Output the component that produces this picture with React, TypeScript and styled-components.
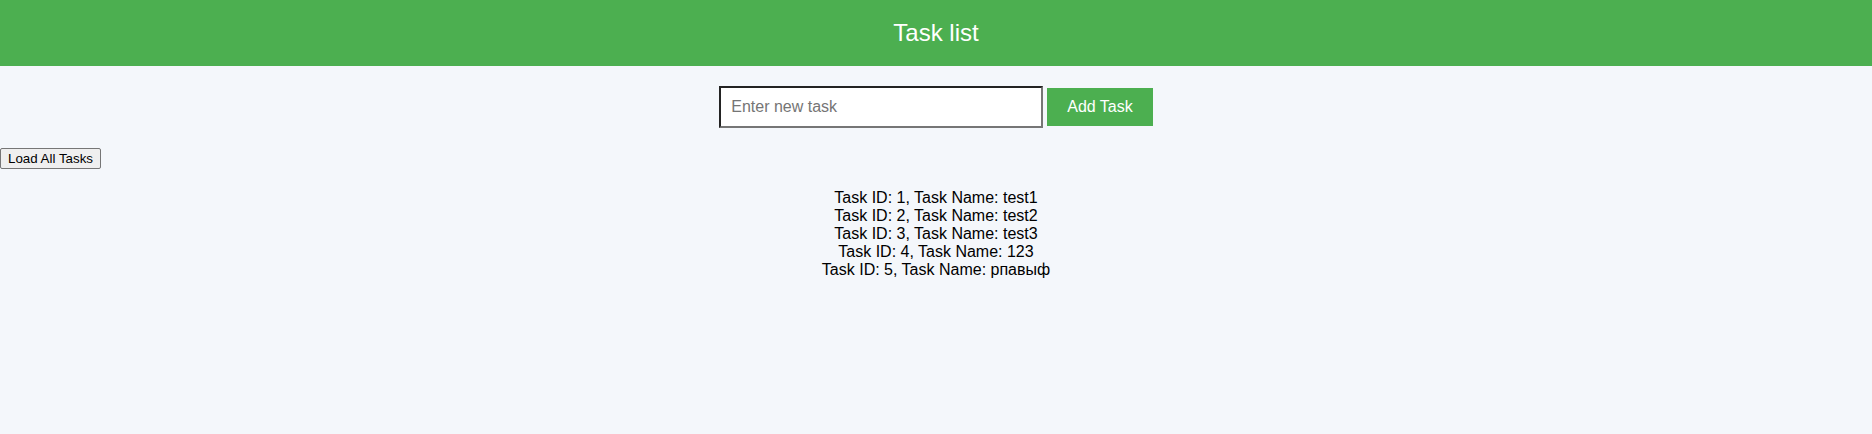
import React from "react";
import styled, { createGlobalStyle } from "styled-components";

const GlobalStyle = createGlobalStyle`
  html, body {
    margin: 0;
    padding: 0;
    background: #f4f7fb;
  }
  body {
    font-family: "Liberation Sans", Arial, sans-serif;
    color: #000;
  }
`;

const Page = styled.div`
  min-height: 434px;
  background: #f4f7fb;
`;

const Header = styled.header`
  height: 66px;
  background: #4caf50;
  display: flex;
  align-items: center;
  justify-content: center;
`;

const Title = styled.h1`
  margin: 0;
  font-size: 24px;
  font-weight: 400;
  color: #ffffff;
`;

const Form = styled.form`
  display: flex;
  justify-content: center;
  align-items: center;
  gap: 4px;
  margin: 20px 0;
`;

const TaskInput = styled.input`
  width: 300px;
  padding: 10px;
  font-family: "Liberation Sans", Arial, sans-serif;
  font-size: 16px;
  background: #fff;
  border-style: solid;
  border-width: 2px;
  border-color: #232323 #767676 #767676 #232323;
  outline: none;
  &::placeholder {
    color: #757575;
  }
`;

const AddButton = styled.button`
  padding: 10px 20px;
  font-family: "Liberation Sans", Arial, sans-serif;
  font-size: 16px;
  line-height: 18px;
  color: #fff;
  background: #4caf50;
  border: none;
  cursor: pointer;
`;

const LoadButton = styled.button`
  display: block;
  margin: 0;
  padding: 2px 7px;
  font-family: "Liberation Sans", Arial, sans-serif;
  font-size: 13.333px;
  line-height: 15px;
  color: #000;
  background: #efefef;
  border: 1px solid #767676;
  border-radius: 2px;
`;

const TaskList = styled.div`
  margin-top: 20px;
  text-align: center;
  font-size: 16px;
  line-height: 18px;
`;

const TaskRow = styled.div``;

const tasks = [
  { id: 1, name: "test1" },
  { id: 2, name: "test2" },
  { id: 3, name: "test3" },
  { id: 4, name: "123" },
  { id: 5, name: "рпавыф" },
];

export default function App() {
  return (
    <Page>
      <GlobalStyle />
      <Header>
        <Title>Task list</Title>
      </Header>
      <Form onSubmit={(e) => e.preventDefault()}>
        <TaskInput type="text" placeholder="Enter new task" />
        <AddButton type="submit">Add Task</AddButton>
      </Form>
      <LoadButton type="button">Load All Tasks</LoadButton>
      <TaskList>
        {tasks.map((t) => (
          <TaskRow key={t.id}>
            Task ID: {t.id}, Task Name: {t.name}
          </TaskRow>
        ))}
      </TaskList>
    </Page>
  );
}
